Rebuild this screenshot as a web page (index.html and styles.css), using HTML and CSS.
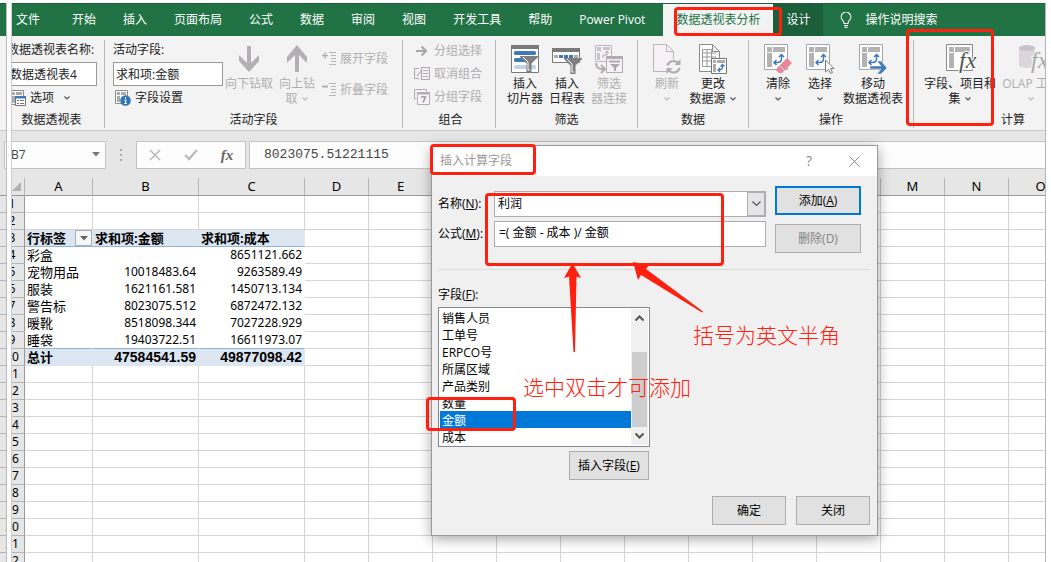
FILE: index.html
```html
<!DOCTYPE html>
<html lang="zh-CN">
<head>
<meta charset="utf-8">
<title>数据透视表 - 插入计算字段</title>
<link rel="stylesheet" href="styles.css">
</head>
<body>
<svg class="defs" aria-hidden="true">
  <defs>
    <symbol id="pivot" viewBox="0 0 25 27">
      <path d="M.5.5h23v25H.5z" fill="#fff" stroke="#a6a6a6"/>
      <path d="M3 3h5v5H3zM9 3h12v5H9zM3 9h5v14H3z" fill="#b3b3b3"/>
      <path d="M17.500 11v4q0 3.500-4.500 3.500h-3M15 13l2.500-2.500L20 13M12.500 16L10 18.500l2.500 2.500" fill="none" stroke="#3f79b7" stroke-width="1.500"/>
    </symbol>
    <symbol id="chev" viewBox="0 0 6 4"><path d="M.5.5L3 3 5.500.5" fill="none" stroke="currentColor" stroke-width="1.200"/></symbol>
    <symbol id="funnel" viewBox="0 0 18 17"><path d="M0 0h18v1l-6.500 6.500V16H6.500V7.500L0 1z" fill="#7f7f7f"/><path d="M3 1l5 5v8h2" fill="none" stroke="#fff"/></symbol>
  </defs>
</svg>
<div class="app">
  <nav class="tabs">
    <button class="tab file">文件</button>
    <button class="tab">开始</button>
    <button class="tab">插入</button>
    <button class="tab">页面布局</button>
    <button class="tab">公式</button>
    <button class="tab">数据</button>
    <button class="tab">审阅</button>
    <button class="tab">视图</button>
    <button class="tab">开发工具</button>
    <button class="tab">帮助</button>
    <button class="tab">Power Pivot</button>
    <button class="tab active">数据透视表分析</button>
    <button class="tab context">设计</button>
    <button class="tell">
      <svg width="12" height="16" viewBox="0 0 12 16"><path d="M4 11.500Q4 9.500 2.500 8.200A4.800 4.800 0 1 1 9.500 8.200Q8 9.500 8 11.500zM4 13.500h4M4.500 15.400h3" fill="none" stroke="#fff" stroke-width="1.100"/></svg>
      操作说明搜索</button>
  </nav>

  <div class="ribbon">
    <section class="group g-table">
      <div class="body">
        <div class="stack">
          <label for="pt-name">数据透视表名称:</label>
          <input id="pt-name" value="数据透视表4">
          <button class="small options">
            <svg width="16" height="16" viewBox="0 0 16 16"><path d="M.5.5h13v14H.5z" fill="#fff" stroke="#8a8a8a"/><path d="M2 2h3v3H2zM6 2h6v3H6zM2 6h3v7H2z" fill="#aaa"/><path d="M5.500 6.500h10v9h-10z" fill="#fff" stroke="#777"/><path d="M5 6h11v2.500H5z" fill="#3f79b7"/><path d="M7 10.500h2M10 10.500h4M7 13.500h2M10 13.500h4" stroke="#777"/></svg>
            选项 <svg class="chev" width="6" height="4"><use href="#chev"/></svg></button>
        </div>
      </div>
      <h2>数据透视表</h2>
    </section>

    <section class="group g-field">
      <div class="body">
        <div class="stack">
          <label for="af">活动字段:</label>
          <input id="af" value="求和项:金额">
          <button class="small settings">
            <svg width="16" height="16" viewBox="0 0 16 16"><path d="M.5.500h12v13H.5z" fill="#fff" stroke="#8a8a8a"/><path d="M2 2h3v3H2zM6 2h5v3H6zM2 6h3v6H2z" fill="#aaa"/><circle cx="10.500" cy="10.500" r="5.300" fill="#2f74b5"/><path d="M10.500 7v1.600M9.500 10h1.200v3.500M9.300 13.500h2.600" fill="none" stroke="#fff" stroke-width="1.200"/></svg>
            字段设置</button>
        </div>
        <button class="large w48 drill" disabled><svg width="22" height="28" viewBox="0 0 22 28"><path d="M9 1h4v17l8-8v6L11 27 1 16v-6l8 8z" fill="#b3b0b3"/></svg><span>向下钻取</span></button>
        <button class="large w48" disabled><svg width="22" height="28" viewBox="0 0 22 28"><path d="M9 27h4V10l8 8v-6L11 0 1 12v6l8-8z" fill="#b3b0b3"/></svg><span>向上钻<br>取 <svg class="chev" width="6" height="4"><use href="#chev"/></svg></span></button>
        <div class="list two">
          <button class="small" disabled><svg width="14" height="14" viewBox="0 0 14 14"><path d="M0 3.500h6M3 .5v6" stroke="#b3b0b3" stroke-width="1.500"/><path d="M7 .5h7M9 3.500h5M9 6.500h5M9 9.500h5M7 12.500h7" stroke="#b8b5b8"/></svg>展开字段</button>
          <button class="small" disabled><svg width="14" height="14" viewBox="0 0 14 14"><path d="M0 3.500h6" stroke="#b3b0b3" stroke-width="2"/><path d="M7 .5h7M9 3.500h5M9 6.500h5M9 9.500h5M7 12.500h7" stroke="#b8b5b8"/></svg>折叠字段</button>
        </div>
      </div>
      <h2>活动字段</h2>
    </section>

    <section class="group g-group">
      <div class="body">
        <div class="list">
          <button class="small" disabled><svg width="16" height="14" viewBox="0 0 16 14"><path d="M2 7h9M7.500 2.500L12 7l-4.500 4.500" fill="none" stroke="#aaa7aa" stroke-width="2.200"/></svg>分组选择</button>
          <button class="small" disabled><svg width="16" height="14" viewBox="0 0 16 14"><path d="M5 1.500H.5v10H5M7.500.5h8v12h-8zM9 3.500h5M9 6.500h5M9 9.500h5M3 9l4-5" fill="none" stroke="#b3a9b3" stroke-width="1.200"/></svg>取消组合</button>
          <button class="small" disabled><svg width="16" height="16" viewBox="0 0 16 16"><path d="M2.500 10H.5V.500h12V3" fill="none" stroke="#b5abb5"/><path d="M3.500 3.500h12v12h-12z" fill="#f8f3f8" stroke="#b5abb5"/><path d="M3 4.500h13" stroke="#b5abb5" stroke-width="2"/><path d="M7 8h4.500L9 13.500" fill="none" stroke="#999" stroke-width="1.500"/></svg>分组字段</button>
        </div>
      </div>
      <h2>组合</h2>
    </section>

    <section class="group g-filter">
      <div class="body">
        <button class="large w42"><svg width="28" height="28" viewBox="0 0 28 28"><path d="M.5.500h27v27H.5z" fill="#fff" stroke="#7a7a7a"/><path d="M0 0h28v4H0z" fill="#7a7a7a"/><rect x="3" y="6" width="22" height="4" rx="1.500" fill="#3f79b7"/><rect x="3" y="13" width="14" height="4" rx="1.500" fill="#3f79b7"/><rect x="3" y="20" width="22" height="4" rx="1.500" fill="#bcd3ea"/><use href="#funnel" x="9" y="11" width="18" height="17"/></svg><span>插入<br>切片器</span></button>
        <button class="large w42"><svg width="30" height="30" viewBox="0 0 30 30"><path d="M.5 4.500h27v14H.5z" fill="#fff" stroke="#7a7a7a"/><path d="M0 4h28v4H0z" fill="#7a7a7a"/><path d="M2 11h4v3H2zM22 11h4v3h-4z" fill="#aaa"/><path d="M7 11h4v3H7zM12 11h4v3h-4zM17 11h4v3h-4z" fill="#3f79b7"/><use href="#funnel" x="12" y="14" width="18" height="17"/></svg><span>插入<br>日程表</span></button>
        <button class="large w42" disabled><svg width="28" height="28" viewBox="0 0 28 28"><path d="M.5.500h16v16H.5z" fill="#f7f1f7" stroke="#bdb8bd"/><path d="M2 2h4v4H2zM8 2h7v3H8zM2 8h3v7H2z" fill="#c9c5c9"/><path d="M8 13v-3h4V7M10 8l2-2 2 2" fill="none" stroke="#aaa"/><path d="M11.500 11.500h16v16h-16z" fill="#f7f1f7" stroke="#b0acb0"/><path d="M11 11h17v3H11z" fill="#b0acb0"/><path d="M14 16.500h11" stroke="#b0acb0" stroke-width="2"/><path d="M15 19h10l-4 4v3h-2v-3z" fill="#aaa"/><path d="M1 18q0 6 6 6h2M6 20l4 4-4 4" fill="none" stroke="#b0acb0" stroke-width="2"/></svg><span>筛选<br>器连接</span></button>
      </div>
      <h2>筛选</h2>
    </section>

    <section class="group g-data">
      <div class="body">
        <button class="large w42" disabled><svg width="28" height="30" viewBox="0 0 28 30"><path d="M.5.500h13l7 7v20H.5zM13.500.5v7h7" fill="#f7f1f7" stroke="#b9b5b9"/><circle cx="20.500" cy="22.500" r="7.500" fill="#f3f3f3"/><path d="M14.500 21.500a6 5.500 0 0 1 10.500-2.500M26.500 24a6 5.500 0 0 1-10.500 2.500" fill="none" stroke="#b0acb0" stroke-width="2.200"/><path d="M27.500 15v6h-6zM13.500 30v-6h6z" fill="#b0acb0"/></svg><span>刷新<br><svg class="chev" width="6" height="4"><use href="#chev"/></svg></span></button>
        <button class="large w50"><svg width="28" height="30" viewBox="0 0 28 30"><path d="M.5.500h13l7 7v20H.5zM13.500.5v7h7" fill="#fff" stroke="#8a8a8a"/><path d="M3.500 5.500h9v17h-9zM3.500 9h14M3.500 13h14M3.500 17h9M8 5.500v17" fill="none" stroke="#999"/><path d="M12.500 14.500h15v15h-15z" fill="#fff" stroke="#777"/><path d="M14 16h3v3h-3zM18 16h8v3h-8zM14 20h3v8h-3z" fill="#aaa"/><path d="M23.500 21v2q0 3-4 3M21.500 22.500l2-2 2 2M21 24l-2 2 2 2" fill="none" stroke="#3f79b7" stroke-width="1.300"/></svg><span>更改<br>数据源 <svg class="chev" width="6" height="4"><use href="#chev"/></svg></span></button>
      </div>
      <h2>数据</h2>
    </section>

    <section class="group g-action">
      <div class="body">
        <button class="large w42"><svg width="28" height="30" viewBox="0 0 28 30"><use href="#pivot" width="25" height="27"/><path d="M13 24L23 14l5 5-10 10h-3l-3-3z" fill="#e8879a"/><path d="M15.500 21.500l5 5" stroke="#f3f3f3"/></svg><span>清除<br><svg class="chev" width="6" height="4"><use href="#chev"/></svg></span></button>
        <button class="large w42"><svg width="28" height="30" viewBox="0 0 28 30"><use href="#pivot" width="25" height="27"/><path d="M19.500 16v12l3-2.500 2 4 2-1-2-4h3.500z" fill="#fff" stroke="#777"/></svg><span>选择<br><svg class="chev" width="6" height="4"><use href="#chev"/></svg></span></button>
        <button class="large w64"><svg width="28" height="30" viewBox="0 0 28 30"><use href="#pivot" width="25" height="27"/><path d="M11 22h11l-4-5h4l6 7-6 6h-4l4-5H11z" fill="#3f79b7" stroke="#fff" stroke-width=".5"/></svg><span>移动<br>数据透视表</span></button>
      </div>
      <h2>操作</h2>
    </section>

    <section class="group g-calc">
      <div class="body">
        <button class="large w78"><svg width="28" height="30" viewBox="0 0 28 30"><path d="M.5.500h26v26H.5z" fill="#fff" stroke="#8a8a8a"/><path d="M3 3h5v5H3zM9 3h15v5H9zM3 9h5v15H3z" fill="#b3b3b3"/><text class="fx" x="13" y="24" font-size="24" fill="#555" stroke="#fff" stroke-width="2" paint-order="stroke">fx</text></svg><span>字段、项目和<br>集 <svg class="chev" width="6" height="4"><use href="#chev"/></svg></span></button>
        <button class="large w64" disabled><svg width="30" height="30" viewBox="0 0 30 30"><path d="M3 3v18q0 3 8 3t8-3V3z" fill="#dcd6dc"/><ellipse cx="11" cy="4" rx="8" ry="3" fill="#c9c3c9"/><text class="fx" x="15" y="24" font-size="24" fill="#aaa" stroke="#f3f3f3" stroke-width="2" paint-order="stroke">fx</text></svg><span>OLAP 工具<br><svg class="chev" width="6" height="4"><use href="#chev"/></svg></span></button>
      </div>
      <h2>计算</h2>
    </section>
  </div>

  <div class="formula-bar">
    <div class="name-box"><input aria-label="名称框" value="B7"><svg width="8" height="5" viewBox="0 0 8 5"><path d="M0 0h8L4 4.500z" fill="#777"/></svg></div>
    <svg class="dots" width="2" height="12" viewBox="0 0 2 12"><path d="M0 0h2v2H0zM0 5h2v2H0zM0 10h2v2H0z" fill="#aaa"/></svg>
    <div class="fbuttons">
      <button aria-label="取消"><svg width="12" height="12" viewBox="0 0 12 12"><path d="M1 1l10 10M11 1L1 11" stroke="#bbb" stroke-width="1.600"/></svg></button>
      <button aria-label="输入"><svg width="14" height="12" viewBox="0 0 14 12"><path d="M1 6l4 4 8-9" fill="none" stroke="#bbb" stroke-width="2.400"/></svg></button>
      <button class="insert-fn" aria-label="插入函数">fx</button>
    </div>
    <input class="formula" aria-label="编辑栏" value="8023075.51221115">
  </div>

  <div class="sheet"><table id="grid"></table></div>
  <div class="edge"></div>
</div>

<div class="dialog" role="dialog" aria-labelledby="dlg-title">
  <header>
    <span id="dlg-title">插入计算字段</span>
    <button aria-label="帮助">?</button>
    <button aria-label="关闭窗口"><svg width="11" height="11" viewBox="0 0 11 11"><path d="M.5.5l10 10M10.500.5l-10 10" stroke="#888"/></svg></button>
  </header>
  <div class="content">
    <div class="top">
      <div class="fields">
        <label for="f-name">名称(<u>N</u>):</label>
        <div class="combo"><input id="f-name" value="利润"><button aria-label="展开"><svg width="9" height="6" viewBox="0 0 9 6"><path d="M.5.500l4 4 4-4" fill="none" stroke="#555" stroke-width="1.200"/></svg></button></div>
        <label for="f-formula">公式(<u>M</u>):</label>
        <input id="f-formula" value="=( 金额 - 成本 )/ 金额">
      </div>
      <div class="side">
        <button class="btn primary">添加(<u>A</u>)</button>
        <button class="btn" disabled>删除(D)</button>
      </div>
    </div>
    <hr>
    <label class="list-label" for="f-list">字段(<u>F</u>):</label>
    <div class="listbox">
      <select id="f-list" size="8">
        <option>销售人员</option><option>工单号</option><option>ERPCO号</option><option>所属区域</option><option>产品类别</option><option>数量</option><option selected>金额</option><option>成本</option>
      </select>
      <div class="scroll">
        <svg width="9" height="7" viewBox="0 0 9 7"><path d="M.5 5.500l4-4 4 4" fill="none" stroke="#555" stroke-width="2"/></svg>
        <div class="thumb"></div>
        <svg width="9" height="7" viewBox="0 0 9 7"><path d="M.5 1.500l4 4 4-4" fill="none" stroke="#555" stroke-width="2"/></svg>
      </div>
    </div>
    <button class="btn insert">插入字段(<u>E</u>)</button>
    <footer><button class="btn">确定</button><button class="btn">关闭</button></footer>
  </div>
</div>

<div class="mark m-tab"></div>
<div class="mark m-calc"></div>
<div class="mark m-title"></div>
<div class="mark m-formula"></div>
<div class="mark m-item"></div>
<svg class="arrows" width="150" height="100" viewBox="0 0 150 100"><path d="M8.500 1L17 16l-4.500-1.500L11 90H9.500L5 14.500 0 16z" fill="#ff2010"/><path d="M69 0l16 3-3 4 57 42.500-1 1L77 13l-3 5z" fill="#ff2010"/></svg>
<p class="note n-pick">选中双击才可添加</p>
<p class="note n-bracket">括号为英文半角</p>
<script src="script.js"></script>
</body>
</html>
```
FILE: styles.css
```css
* { box-sizing: border-box; }
body {
  margin: 0;
  background: #fff;
  color: #222;
  font: 12px/16px "Open Sans", "Noto Sans CJK SC", sans-serif;
  overflow: hidden;
}
button, input, select { font: inherit; color: inherit; margin: 0; padding: 0; border: 0; background: none; outline: 0; border-radius: 0; }
button { white-space: nowrap; }
h2, p { margin: 0; font-weight: normal; font-size: 12px; }
svg { flex: none; }
.defs { position: absolute; width: 0; height: 0; }
.fx { font-family: "Liberation Serif", serif; font-style: italic; }

.app {
  position: relative;
  display: flex;
  flex-direction: column;
  height: calc(100vh - 3px);
  margin: 3px 5px 0 0;
  border-right: 1px solid #b5b5b5;
  overflow: hidden;
}
.edge {
  position: absolute;
  left: 6px;
  top: 0;
  bottom: 0;
  width: 6px;
  background: #fff;
  border-left: 1px solid #bbb;
  border-right: 1px solid #ccc;
}

.tabs { display: flex; flex: none; gap: 1px; height: 33px; padding-left: 3px; background: #217346; border-top: 1px solid #1c5f3a; color: #fff; }
.tab { padding: 0 13px; }
.tab.file { margin-right: 5px; }
.tab.active { background: #f3f3f3; color: #217346; margin-left: 4px; }
.tab.context { background: #1b5e3a; margin-left: -1px; }
.tell { display: flex; align-items: center; gap: 13px; padding-left: 16px; }

.ribbon { display: flex; flex: none; height: 95px; padding: 4px 0 2px; background: #f3f3f3; border-bottom: 1px solid #c9c9c9; overflow: hidden; }
.group { display: flex; flex-direction: column; flex: none; border-right: 1px solid #b8b8b8; }
.group h2 { margin-right: 8px; text-align: center; line-height: 16px; }
.body { display: flex; flex: 1; }
.g-table { width: 105px; padding-left: 7px; }
.g-field { width: 298px; padding-left: 8px; }
.g-group { width: 93px; padding-left: 11px; }
.g-filter { width: 142px; padding-left: 8px; }
.g-data { width: 111px; padding-left: 8px; }
.g-action { width: 165px; padding-left: 8px; }
.g-calc { width: 200px; padding-left: 7px; }
.stack { display: flex; flex-direction: column; width: 110px; }
.g-table .stack { width: 90px; }
.stack label { line-height: 20px; white-space: nowrap; }
.stack input { height: 24px; margin-top: 2px; padding: 0 2px; border: 1px solid #999; background: #fff; width: 100%; }
.small { display: flex; align-items: center; gap: 4px; height: 16px; }
.options { margin-top: 4px; padding-left: 3px; }
.options .chev { margin-left: 6px; }
.settings { margin-top: 4px; padding-left: 2px; }
.list { display: flex; flex-direction: column; gap: 7px; padding-top: 3px; }
.list.two { gap: 15px; padding: 11px 0 0 1px; }
button:disabled { color: #b0aeb0; }
.large { display: flex; flex-direction: column; align-items: center; padding-top: 4px; line-height: 15px; }
.large > svg { height: 30px; overflow: visible; }
.large span { margin-top: 2px; }
.drill { margin: 0 0 0 2px; }
.chev { color: #555; vertical-align: 2px; margin: 0 1px; }
:disabled .chev { color: #bbb; }
.w42 { width: 42px; }
.w48 { width: 48px; }
.w50 { width: 50px; }
.w64 { width: 64px; }
.w78 { width: 78px; }

.formula-bar { display: flex; flex: none; align-items: center; height: 47px; background: #e6e6e6; padding-left: 4px; }
.name-box, .fbuttons, .formula { height: 28px; background: #fdfdfd; border: 1px solid #c3c3c3; }
.name-box { display: flex; align-items: center; width: 102px; padding: 0 5px 0 6px; color: #444; }
.name-box input { flex: 1; min-width: 0; }
.dots { margin: 0 14px; }
.fbuttons { display: flex; width: 110px; }
.fbuttons button { flex: 1; display: grid; place-items: center; }
.fbuttons .insert-fn { font: italic bold 15px/20px "Liberation Serif", serif; color: #666; }
.formula { flex: 1; min-width: 0; margin-left: 3px; padding-left: 14px; border-right: 0; font: 13px/20px "Liberation Mono", monospace; color: #444; }

.sheet { flex: 1; min-height: 0; overflow: hidden; }
#grid { border-collapse: separate; border-spacing: 0; table-layout: fixed; width: 1073px; font-size: 13px; line-height: 16px; color: #000; }
#grid th, #grid td { height: 17px; padding: 0; border-right: 1px solid #d4d4d4; border-bottom: 1px solid #d4d4d4; white-space: nowrap; overflow: hidden; }
#grid th { background: #e6e6e6; font: 12px/16px "Noto Sans", sans-serif; border-color: #b5b5b5; }
#grid thead th { height: 18px; font-size: 13px; line-height: 17px; border-bottom-color: #999; }
#grid tbody th { border-right-color: #999; }
#grid .corner { text-align: right; }
.corner svg { margin-right: 3px; }
#grid td.pivot { padding: 0 2px; border-color: #fff; }
#grid td.num { text-align: right; font: 12px/16px "Noto Sans", sans-serif; }
#grid .head td.pivot { background: #dce6f1; border-color: #dce6f1; border-bottom-color: #95b3d7; font-weight: bold; }
#grid .before td.pivot { border-bottom-color: #95b3d7; }
#grid .total td.pivot { background: #dce6f1; border-color: #dce6f1; font-weight: bold; }
#grid .total td.num { font: bold 14px/16px "Liberation Sans", sans-serif; }
.headcell { display: flex; justify-content: space-between; }
.filter { display: grid; place-items: center; width: 17px; height: 16px; background: #f7f7f7; border: 1px solid #a5b1c0; }
#grid td.pivot.first { padding-right: 0; }
.c-row { width: 25px; }
.c-a { width: 68px; }
.c-b { width: 106px; }
.c-n { width: 64px; }

.dialog { position: absolute; left: 431px; top: 145px; width: 447px; background: #f0f0f0; border: 1px solid #999; box-shadow: 0 3px 12px rgba(0, 0, 0, .35); color: #000; }
.dialog header { display: flex; align-items: center; height: 30px; padding: 0 17px 0 8px; background: #fff; color: #999; }
.dialog header span { flex: 1; }
.dialog header button { color: #888; width: 12px; margin-left: 33px; display: grid; place-items: center; font-size: 14px; }
.content { display: flex; flex-direction: column; padding: 10px 7px 10px 6px; }
.top { display: flex; gap: 9px; padding-right: 9px; }
.fields { flex: 1; display: grid; grid-template-columns: 56px 1fr; grid-auto-rows: 26px; row-gap: 4px; padding-top: 5px; align-items: center; }
.fields input { height: 26px; width: 100%; min-width: 0; padding: 0 4px 4px; background: #fff; border: 1px solid #abadb3; }
.combo { display: flex; border: 1px solid #abadb3; }
.combo input { border: 0; height: 24px; flex: 1; padding: 0 3px 2px; }
.combo button { width: 18px; height: 24px; background: #e5e5e5; border: 1px solid #abadb3; display: grid; place-items: center; }
.side { display: flex; flex-direction: column; gap: 9px; width: 86px; }
.btn { height: 29px; background: #e1e1e1; border: 1px solid #adadad; }
.btn.primary { border: 2px solid #0078d7; }
.btn:disabled { color: #838383; }
hr { width: 100%; margin: 16px 0 0; border: 0; border-top: 1px solid #dcdcdc; }
.list-label { margin-top: 17px; }
.listbox { display: flex; width: 212px; height: 140px; margin-top: 4px; padding: 1px; background: #fff; border: 1px solid #828790; }
.listbox select { flex: 1; height: 138px; overflow: hidden; scrollbar-width: none; }
.listbox option { height: 17px; min-height: 17px; padding: 0 2px; line-height: 16px; }
.listbox option:checked { background: linear-gradient(#0078d7, #0078d7); color: #fff; -webkit-text-fill-color: #fff; }
.scroll { display: flex; flex-direction: column; align-items: center; width: 17px; padding: 6px 0; background: #f0f0f0; }
.thumb { width: 15px; height: 75px; margin: auto 0 5px; background: #cdcdcd; }
.insert { width: 80px; margin: 4px 0 0 131px; }
footer { display: flex; justify-content: flex-end; gap: 10px; margin-top: 16px; }
footer .btn { width: 74px; }

.mark { position: absolute; border: 3px solid #ff2010; border-radius: 4px; pointer-events: none; }
.m-tab { left: 674px; top: 7px; width: 108px; height: 29px; }
.m-calc { left: 906px; top: 29px; width: 88px; height: 97px; }
.m-title { left: 430px; top: 144px; width: 106px; height: 31px; }
.m-formula { left: 485px; top: 193px; width: 239px; height: 73px; }
.m-item { left: 426px; top: 397px; width: 90px; height: 34px; }
.arrows { position: absolute; left: 564px; top: 262px; pointer-events: none; }
.note { position: absolute; color: #ff2010; font: 300 21px/30px "Noto Sans CJK SC", sans-serif; white-space: nowrap; }
.n-pick { left: 523px; top: 371px; }
.n-bracket { left: 693px; top: 319px; }
```
FILE: script.js
```js
const columns = ['A', 'B', 'C', 'D', 'E', 'F', 'G', 'H', 'I', 'J', 'K', 'L', 'M', 'N', 'O'];
const widths = { A: 'c-a', B: 'c-b', C: 'c-b' };
const pivot = {
  3: ['行标签', '求和项:金额', '求和项:成本'],
  4: ['彩盒', '', '8651121.662'],
  5: ['宠物用品', '10018483.64', '9263589.49'],
  6: ['服装', '1621161.581', '1450713.134'],
  7: ['警告标', '8023075.512', '6872472.132'],
  8: ['暖靴', '8518098.344', '7027228.929'],
  9: ['睡袋', '19403722.51', '16611973.07'],
  10: ['总计', '47584541.59', '49877098.42']
};
const rowClass = { 3: 'head', 9: 'before', 10: 'total' };
const triangle = '<svg width="9" height="9" viewBox="0 0 9 9"><path d="M9 0v9H0z" fill="#b0b0b0"/></svg>';
const filter = '<button class="filter" aria-label="筛选"><svg width="8" height="5" viewBox="0 0 8 5"><path d="M0 0h8L4 4.500z" fill="#666"/></svg></button>';

let html = '<colgroup><col class="c-row">' + columns.map(c => `<col class="${widths[c] || 'c-n'}">`).join('') + '</colgroup>';
html += `<thead><tr><th class="corner">${triangle}</th>` + columns.map(c => `<th>${c}</th>`).join('') + '</tr></thead><tbody>';
for (let r = 1; r <= 22; r++) {
  html += `<tr class="${rowClass[r] || ''}"><th>${r}</th>`;
  columns.forEach((c, i) => {
    const value = pivot[r] && pivot[r][i];
    if (value === undefined) { html += '<td></td>'; return; }
    if (r === 3 && i === 0) { html += `<td class="pivot first"><div class="headcell">${value}${filter}</div></td>`; return; }
    html += `<td class="pivot${i > 0 && r > 3 ? ' num' : ''}">${value}</td>`;
  });
  html += '</tr>';
}
document.getElementById('grid').innerHTML = html + '</tbody>';
```
